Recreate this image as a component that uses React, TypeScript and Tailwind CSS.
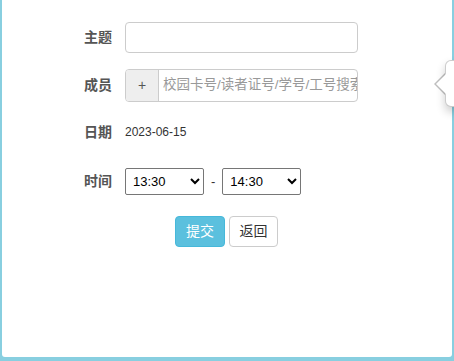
import React from "react";

export default function App() {
  const font = { fontFamily: '"Liberation Sans", Arial, "Noto Sans CJK SC", sans-serif' };
  return (
    <div
      className="relative w-[454px] h-[361px] overflow-hidden bg-[#88cfe0] px-[2px] pb-[4px]"
      style={font}
    >
      <div className="h-full bg-white rounded-b-[3px] pt-[22px] flex flex-col">
        {/* 主题 */}
        <div className="flex items-center">
          <div className="w-[123px] pr-[13px] text-right text-[14px] font-bold text-[#555]">主题</div>
          <input
            className="w-[233px] h-[31px] border border-[#ccc] rounded-[4px] px-[10px] text-[14px] outline-none"
          />
        </div>
        {/* 成员 */}
        <div className="flex items-center mt-[16px]">
          <div className="w-[123px] pr-[13px] text-right text-[14px] font-bold text-[#555]">成员</div>
          <div className="flex w-[233px] h-[33px] border border-[#ccc] rounded-[4px] overflow-hidden">
            <div className="w-[33px] shrink-0 bg-[#eee] border-r border-[#ccc] flex items-center justify-center text-[14px] text-[#555]">
              +
            </div>
            <input
              className="flex-1 min-w-0 pl-[4px] pr-0 text-[13.5px] text-[#555] placeholder:text-[#999] outline-none"
              placeholder="校园卡号/读者证号/学号/工号搜索"
            />
          </div>
        </div>
        {/* 日期 */}
        <div className="flex items-center mt-[20px] h-[20px]">
          <div className="w-[123px] pr-[13px] text-right text-[14px] font-bold text-[#555]">日期</div>
          <div className="text-[12px] text-[#333]">2023-06-15</div>
        </div>
        {/* 时间 */}
        <div className="flex items-center mt-[26px]">
          <div className="w-[123px] pr-[13px] text-right text-[14px] font-bold text-[#555]">时间</div>
          <select
            defaultValue="13:30"
            className="w-[79px] h-[27px] border border-[#767676] rounded-[2px] bg-white text-[13px] text-black pl-[3px]"
          >
            <option>13:00</option>
            <option>13:30</option>
            <option>14:00</option>
          </select>
          <span className="mx-[7px] text-[13px] text-[#333]">-</span>
          <select
            defaultValue="14:30"
            className="w-[79px] h-[27px] border border-[#767676] rounded-[2px] bg-white text-[13px] text-black pl-[3px]"
          >
            <option>14:00</option>
            <option>14:30</option>
            <option>15:00</option>
          </select>
        </div>
        {/* buttons */}
        <div className="flex mt-[21px] pl-[173px] gap-[4px]">
          <button className="w-[50px] h-[31px] rounded-[4px] bg-[#5bc0de] border border-[#46b8da] text-white text-[14px]">
            提交
          </button>
          <button className="w-[49px] h-[31px] rounded-[4px] bg-white border border-[#ccc] text-[#333] text-[14px]">
            返回
          </button>
        </div>
      </div>

      {/* popover */}
      <div className="absolute left-[445px] top-[60px] w-[60px] h-[47px] bg-white border border-[rgba(0,0,0,0.2)] rounded-[6px] shadow-[0_5px_10px_rgba(0,0,0,0.2)]">
        <div className="absolute left-[-12px] top-[12px] w-0 h-0 border-y-[11px] border-y-transparent border-r-[11px] border-r-[rgba(0,0,0,0.25)]" />
        <div className="absolute left-[-10px] top-[13px] w-0 h-0 border-y-[10px] border-y-transparent border-r-[10px] border-r-white" />
      </div>
    </div>
  );
}
